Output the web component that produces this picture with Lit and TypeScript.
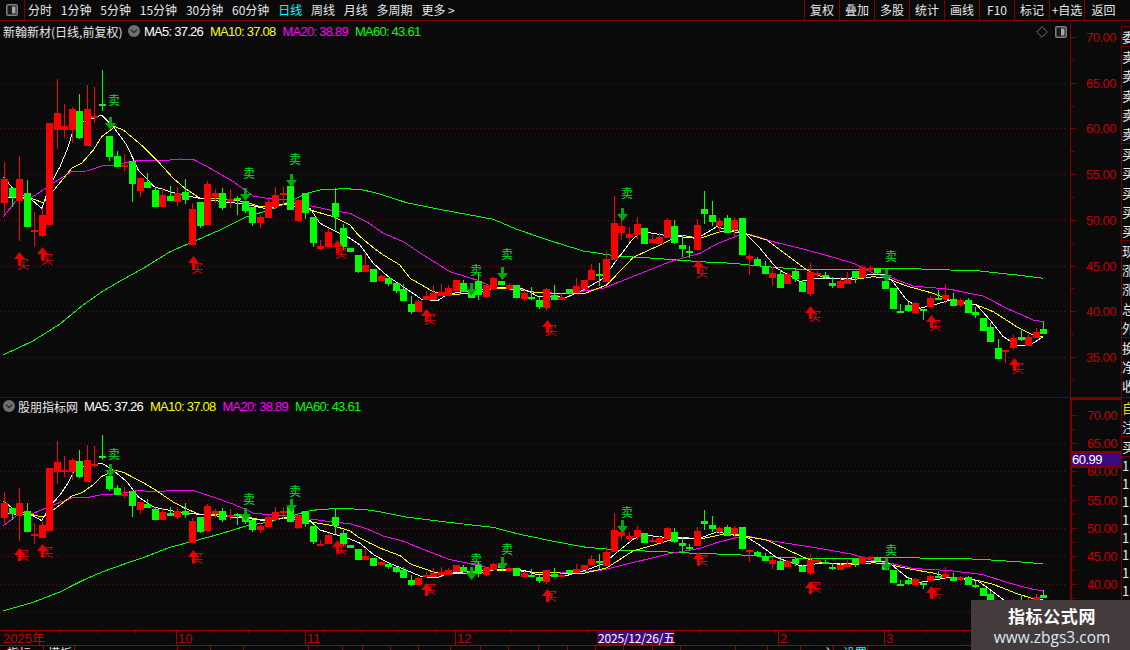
import { LitElement, css, html, svg } from "lit";
import { customElement, property } from "lit/decorators.js";

const RED = "#ff0000";
const GREEN = "#00ff00";

type Pt = [number, number];
// bodyTop, bodyBottom, wickTop, wickBottom, colour. read off 3x crops, hence the origin
type Bar = [number, number, number, number, string];

const r = "r";
const g = "g";

const barsA: Bar[] = [
  [357, 430, 305, 458, r], [384, 412, 384, 440, g], [357, 423, 288, 543, r], [399, 500, 360, 500, g],
  [511, 516, 456, 560, r], [465, 528, 445, 530, r], [190, 495, 190, 495, r], [159, 210, 57, 267, r],
  [198, 209, 132, 234, r], [148, 209, 140, 248, r], [153, 234, 102, 238, g], [148, 258, 75, 258, r],
  [169, 173, 82, 188, r], [132, 137, 30, 152, g], [228, 291, 228, 303, g], [288, 321, 273, 321, g],
  [315, 322, 282, 333, r], [303, 372, 303, 426, g], [354, 393, 354, 411, r], [366, 384, 340, 384, g],
  [390, 441, 380, 441, g], [405, 441, 385, 441, r], [408, 423, 378, 423, g], [400, 426, 381, 438, r],
  [396, 420, 357, 432, g], [447, 555, 430, 555, r], [426, 498, 426, 504, g], [372, 495, 363, 495, r],
  [399, 411, 387, 430, r], [399, 444, 385, 450, g], [417, 426, 387, 444, r], [414, 418, 408, 465, g],
  [423, 453, 423, 459, g], [441, 489, 441, 498, g], [471, 489, 465, 504, r], [426, 474, 411, 474, r],
  [405, 441, 381, 447, r], [399, 403, 381, 435, r], [378, 450, 378, 450, g], [420, 483, 417, 486, r],
  [399, 459, 399, 477, g], [471, 549, 471, 561, g], [558, 567, 540, 570, r], [516, 561, 505, 561, r],
  [429, 471, 384, 510, g], [504, 561, 492, 570, g], [564, 576, 564, 576, g],
];

const barsB: Bar[] = [
  [255, 306, 255, 309, g], [285, 306, 250, 306, r], [297, 336, 297, 336, g], [318, 333, 315, 333, r],
  [324, 342, 324, 348, g], [339, 363, 339, 369, g], [357, 393, 342, 393, g], [402, 426, 378, 432, g],
  [393, 426, 390, 426, r], [378, 390, 363, 390, r], [369, 390, 345, 390, r], [366, 378, 342, 378, r],
  [354, 378, 345, 378, r], [330, 363, 330, 363, r], [339, 366, 330, 366, g], [360, 384, 340, 384, g],
  [333, 375, 310, 390, g], [345, 381, 342, 384, r], [324, 357, 321, 360, r], [333, 345, 333, 345, g],
  [345, 358, 340, 360, r], [345, 384, 345, 384, g], [369, 387, 360, 393, r], [381, 386, 351, 390, g],
  [390, 411, 380, 417, g], [357, 414, 354, 423, r], [375, 390, 345, 390, g], [381, 390, 370, 390, r],
  [357, 372, 357, 372, g], [348, 369, 324, 369, r], [330, 357, 330, 357, r], [300, 330, 282, 330, r],
  [312, 318, 279, 348, g], [267, 336, 243, 336, r], [159, 270, 78, 270, r], [168, 189, 115, 210, r],
  [192, 204, 171, 216, r], [162, 195, 140, 207, r], [174, 222, 174, 222, g], [207, 219, 195, 219, r],
  [201, 222, 190, 222, r], [150, 204, 144, 204, r], [168, 219, 150, 222, g], [225, 237, 195, 261, g],
  [243, 247, 228, 264, g], [165, 240, 147, 240, r],
];

const barsC: Bar[] = [
  [117, 132, 63, 162, g], [135, 156, 93, 168, g], [153, 168, 144, 190, r], [144, 189, 135, 189, g],
  [150, 180, 141, 204, r], [144, 255, 144, 255, g], [258, 267, 252, 315, r], [267, 288, 262, 288, g],
  [288, 312, 273, 312, g], [309, 324, 291, 348, r], [312, 354, 300, 354, g], [312, 342, 309, 342, r],
  [303, 327, 297, 336, g], [336, 366, 330, 366, g], [306, 372, 279, 378, r], [309, 315, 303, 321, r],
  [316, 321, 306, 327, g], [339, 348, 322, 354, g], [333, 354, 322, 354, r], [327, 342, 306, 342, r],
  [303, 324, 303, 339, g], [291, 324, 285, 324, r], [294, 298, 288, 306, r], [297, 310, 297, 312, g],
  [333, 357, 297, 357, g], [354, 417, 354, 417, g], [423, 429, 402, 429, g], [405, 423, 396, 426, g],
  [399, 429, 396, 429, r], [417, 423, 417, 450, g], [384, 411, 378, 411, r], [384, 387, 360, 390, g],
  [375, 387, 342, 402, r], [387, 408, 369, 408, g], [390, 405, 384, 411, r], [390, 429, 384, 429, g],
  [426, 435, 411, 444, g], [444, 483, 444, 483, g], [471, 516, 459, 516, g], [534, 567, 507, 567, g],
  [541, 546, 541, 579, r], [504, 534, 495, 540, r], [501, 510, 477, 513, g], [501, 528, 492, 528, r],
  [486, 504, 474, 504, r], [477, 492, 453, 492, g],
];

const scaleBars = (bars: Bar[], oy: number) =>
  bars.map(([a, b, c, d, col]) => [oy + a / 3, oy + b / 3, oy + c / 3, oy + d / 3, col] as Bar);

const BARS = [...scaleBars(barsA, 60), ...scaleBars(barsB, 170), ...scaleBars(barsC, 170)];

const seg = (ox: number, oy: number, pts: Pt[]) => pts.map(([x, y]) => [ox + x / 3, oy + y / 3] as Pt);

const MA5 = [
  ...seg(0, 60, [[24, 412], [90, 415], [125, 445], [150, 375], [180, 320], [205, 260], [225, 190], [270, 178], [305, 165], [340, 200], [380, 255], [415, 330], [463, 380], [520, 398], [598, 415], [667, 425], [734, 432], [803, 447], [848, 432], [894, 430], [930, 445], [960, 490], [1000, 510], [1050, 535]]),
  ...seg(350, 170, [[30, 225], [70, 280], [115, 320], [160, 350], [215, 388], [262, 392], [295, 372], [340, 365], [430, 355], [499, 350], [540, 365], [560, 378], [650, 382], [700, 360], [760, 325], [800, 270], [850, 205], [880, 185], [950, 197], [1040, 205]]),
  ...seg(700, 170, [[0, 200], [50, 170], [100, 185], [140, 195], [180, 235], [230, 295], [300, 335], [350, 325], [450, 325], [500, 315], [550, 312], [575, 330], [620, 390], [660, 415], [700, 405], [745, 392], [790, 398], [830, 405], [870, 450], [910, 500], [950, 525], [990, 525], [1030, 500]]),
];

const MA10 = [
  ...seg(0, 60, [[10, 350], [50, 400], [130, 428], [170, 380], [215, 325], [245, 310], [280, 270], [305, 230], [345, 200], [370, 210], [400, 235], [430, 260], [470, 300], [520, 355], [555, 385], [600, 415], [660, 415], [734, 425], [780, 440], [848, 432], [930, 450], [1000, 470], [1050, 495]]),
  ...seg(350, 170, [[25, 195], [60, 225], [100, 255], [150, 285], [180, 325], [250, 365], [300, 375], [400, 365], [430, 355], [500, 358], [560, 368], [700, 372], [770, 345], [850, 262], [930, 225], [990, 195], [1050, 205]]),
  ...seg(700, 170, [[60, 185], [110, 182], [140, 192], [200, 210], [260, 255], [320, 300], [370, 322], [450, 330], [520, 320], [560, 325], [620, 348], [700, 370], [760, 395], [830, 405], [880, 425], [950, 470], [1000, 495], [1030, 500]]),
];

const MA20 = [
  ...seg(0, 60, [[10, 470], [50, 420], [100, 410], [150, 375], [215, 335], [260, 333], [310, 317], [350, 315], [410, 300], [480, 303], [540, 297], [580, 298], [640, 330], [700, 365], [760, 408], [800, 415], [870, 420], [930, 437], [1000, 452], [1050, 460]]),
  ...seg(350, 170, [[50, 155], [100, 190], [160, 215], [220, 255], [300, 305], [380, 330], [430, 352], [500, 355], [560, 368], [650, 370], [760, 355], [860, 315], [960, 275], [1050, 250]]),
  ...seg(700, 170, [[50, 222], [110, 198], [150, 193], [220, 215], [320, 240], [400, 262], [460, 280], [520, 310], [570, 322], [640, 348], [750, 358], [850, 378], [920, 415], [1000, 450], [1030, 455]]),
];

const MA60 = [
  [3, 355], [33, 341], [60, 324], [83, 305], [103, 291],
  ...seg(0, 60, [[370, 658], [430, 625], [510, 575], [580, 545], [660, 510], [740, 470], [810, 450], [880, 420], [920, 400], [960, 390], [1050, 385]]),
  ...seg(350, 170, [[0, 58], [40, 60], [90, 72], [170, 98], [280, 120], [430, 148], [500, 178], [600, 212], [700, 243], [800, 258], [900, 264], [1050, 275]]),
  ...seg(700, 170, [[100, 280], [200, 290], [300, 298], [480, 298], [600, 295], [750, 300], [830, 302], [950, 315], [1030, 325]]),
] as Pt[];

// arrow x, arrow top y, label x, label y
const SELLS = [
  [110, 117, 114, 99], [245, 188, 249, 172], [291, 174, 295, 158], [471, 283, 476, 269],
  [502, 267, 507, 253], [622, 208, 627, 192], [886, 269, 891, 255],
];
const BUYS = [
  [19, 252, 23, 263], [42, 247, 47, 258], [193, 256, 197, 267], [337, 240, 341, 252],
  [426, 309, 430, 318], [547, 320, 551, 329], [698, 260, 702, 271], [810, 306, 815, 315],
  [931, 315, 935, 324], [1014, 358, 1018, 367],
];

const LEVELS = [70, 65, 60, 55, 50, 45, 40, 35];

const cornerIcon = html`<svg width="12" height="12" viewBox="0 0 12 12">
  <rect x="0.75" y="0.75" width="10.5" height="10.5" rx="1.5" fill="#1a1a1a" stroke="#808080" stroke-width="1.5"></rect>
  <rect x="6" y="2.5" width="3.5" height="7" fill="#a8a8a8"></rect>
</svg>`;

const roundIcon = html`<svg width="12" height="12" viewBox="0 0 12 12">
  <circle cx="6" cy="6" r="6" fill="#707070"></circle>
  <path d="M3 4.6 L6 7.6 L9 4.6" fill="none" stroke="#242424" stroke-width="1.3"></path>
</svg>`;

@customElement("k-panel")
class KPanel extends LitElement {
  @property({ type: Number }) top = 0;
  @property({ type: Number }) span = 100;
  // page y of the 70.00 line and pixels per 5.00 in this pane
  @property({ type: Number }) y70 = 37;
  @property({ type: Number }) ratio = 1;
  @property({ type: Boolean }) main = false;

  static styles = css`
    :host {
      display: flex;
      position: relative;
      font-family: "Noto Sans CJK SC", "Liberation Sans", sans-serif;
    }
    .plot {
      width: 1070px;
      position: relative;
      overflow: hidden;
    }
    .canvas {
      position: absolute;
      left: 0;
      top: 0;
    }
    .head {
      position: relative;
      display: flex;
      align-items: center;
      padding-left: 3px;
      font-size: 12px;
      color: #e8e8e8;
      white-space: nowrap;
    }
    .main-pane .head {
      height: 20px;
    }
    .sub-pane .head {
      height: 16px;
    }
    .main-pane .name {
      width: 121px;
      margin-right: 4px;
    }
    .sub-pane .name {
      margin: 0 6px 0 3px;
    }
    .main-pane .round {
      margin-right: 4px;
      display: flex;
    }
    .sub-pane .round {
      display: flex;
    }
    .ma {
      font-family: "Liberation Sans", sans-serif;
      font-size: 13px;
      letter-spacing: -0.75px;
      margin-right: 7px;
    }
    .ma5 {
      color: #ffffff;
    }
    .ma10 {
      color: #ffff00;
    }
    .ma20 {
      color: #ff00ff;
    }
    .ma60 {
      color: #00ff00;
    }
    .marks {
      position: absolute;
      top: 5px;
      right: 3px;
      display: flex;
      align-items: center;
      gap: 7px;
    }
    .axis {
      width: 51px;
      position: relative;
      border-left: 1px solid #800000;
      box-sizing: border-box;
    }
    .sub-axis {
      border-left-width: 2px;
      border-top: 2px solid #800000;
    }
    .axis svg {
      display: block;
    }
    .axis text {
      font-family: "Liberation Sans", sans-serif;
      font-size: 13px;
      letter-spacing: -0.5px;
      fill: #c00000;
    }
    .tag {
      position: absolute;
      left: 0;
      right: 0;
      height: 13px;
      line-height: 13px;
      background: #3d0a80;
      border-top: 2px solid #800000;
      border-bottom: 2px solid #800000;
      color: #ffffff;
      font-family: "Liberation Sans", sans-serif;
      font-size: 13px;
      letter-spacing: -0.5px;
    }
  `;

  mapY(y: number) {
    return Math.round(this.y70 + (y - 37) * this.ratio);
  }

  renderBars() {
    return BARS.map((b, i) => {
      const x = Math.round(4 + i * 7.53);
      const col = b[4] === "r" ? RED : GREEN;
      const t = this.mapY(b[0]);
      const h = Math.max(this.mapY(b[1]) - t, 2);
      const hi = this.mapY(b[2]);
      const lo = this.mapY(b[3]);
      return svg`<rect x=${x} y=${hi} width="1" height=${lo - hi} fill=${col}></rect>
        <rect x=${x - 3} y=${t} width="7" height=${h} fill=${col}></rect>`;
    });
  }

  line(points: Pt[], col: string) {
    const d = points.map(([x, y]) => `${x.toFixed(1)},${(this.y70 + (y - 37) * this.ratio).toFixed(1)}`).join(" ");
    return svg`<polyline points=${d} fill="none" stroke=${col} stroke-width="1"></polyline>`;
  }

  renderSignals() {
    const sells = SELLS.map(([ax, ay, tx, ty]) => {
      const y = this.mapY(ay);
      return svg`<path d="M${ax - 1} ${y} h3 v6 h4 l-5.5 7 l-5.5 -7 h4 z" fill="#00a80a"></path>
        <text x=${tx} y=${this.mapY(ty)} text-anchor="middle" dominant-baseline="central" fill="#00e020" font-size="12">卖</text>`;
    });
    const buys = BUYS.map(([ax, ay, tx, ty]) => {
      const y = this.mapY(ay);
      return svg`<path d="M${ax + 0.5} ${y} l5.5 7 h-4 v6 h-3 v-6 h-4 z" fill="#e60000"></path>
        <text x=${tx} y=${this.mapY(ty)} text-anchor="middle" dominant-baseline="central" fill="#f00000" font-size="12">买</text>`;
    });
    return [sells, buys];
  }

  renderAxis() {
    const axisTop = this.main ? this.top : this.top + 2;
    const h = this.span - (this.main ? 0 : 2);
    const step = 45.7 * this.ratio;
    const shown = this.main ? LEVELS : LEVELS.slice(0, 7);
    return svg`<svg width="50" height=${h} viewBox="1071 ${axisTop} 50 ${h}" shape-rendering="crispEdges">
      ${shown.map((p, i) => {
        const y = Math.round(this.y70 + i * step);
        const mid = Math.round(this.y70 + (i + 0.5) * step);
        return svg`<rect x="1071" y=${y} width="5" height="1" fill="#800000"></rect>
          <rect x="1071" y=${mid} width="3" height="1" fill="#800000"></rect>
          <text x="1086" y=${y + 5} shape-rendering="auto">${p.toFixed(2)}</text>`;
      })}
    </svg>`;
  }

  render() {
    const last = this.main ? 356 : 612;
    const grid: number[] = [];
    const step = 45.7 * this.ratio;
    for (let i = 1; this.y70 + i * step <= last + 1; i++) grid.push(Math.round(this.y70 + i * step));
    return html`
      <div class="plot ${this.main ? "main-pane" : "sub-pane"}" style="height:${this.span}px">
        <svg class="canvas" width="1070" height=${this.span} viewBox="0 ${this.top} 1070 ${this.span}" shape-rendering="crispEdges" font-family="Noto Sans CJK SC">
          ${grid.map((y) => svg`<line x1="0" x2="1066" y1=${y + 0.5} y2=${y + 0.5} stroke="#701010" stroke-dasharray="1 3"></line>`)}
          ${this.line(MA60, "#00ff00")}
          ${this.line(MA20, "#ff00ff")}
          ${this.line(MA10, "#ffff00")}
          ${this.line(MA5, "#ffffff")}
          ${this.renderBars()}
          <g shape-rendering="auto">${this.renderSignals()}</g>
        </svg>
        <div class="head">
          ${this.main
            ? html`<span class="name">新翰新材(日线,前复权)</span><span class="round">${roundIcon}</span>`
            : html`<span class="round">${roundIcon}</span><span class="name">股朋指标网</span>`}
          <span class="ma ma5">MA5: 37.26</span>
          <span class="ma ma10">MA10: 37.08</span>
          <span class="ma ma20">MA20: 38.89</span>
          <span class="ma ma60">MA60: 43.61</span>
        </div>
        ${this.main
          ? html`<div class="marks">
              <svg width="12" height="12" viewBox="0 0 12 12"><path d="M6 .7 L11.3 6 L6 11.3 L.7 6 Z" fill="none" stroke="#707070"></path></svg>
              ${cornerIcon}
            </div>`
          : ""}
      </div>
      <div class="axis ${this.main ? "" : "sub-axis"}" style="height:${this.span}px">
        ${this.renderAxis()}
        ${this.main ? "" : html`<div class="tag" style="top:${451 - this.top - 2}px">60.99</div>`}
      </div>
    `;
  }
}

@customElement("app-root")
export class AppRoot extends LitElement {
  static styles = css`
    :host {
      display: flex;
      flex-direction: column;
      width: 1130px;
      height: 650px;
      overflow: hidden;
      background: #0a0a0a;
      color: #e8e8e8;
      font-family: "Noto Sans CJK SC", "Liberation Sans", sans-serif;
      font-size: 12px;
      position: relative;
    }
    .toolbar {
      height: 20px;
      flex: none;
      display: flex;
      align-items: stretch;
      border-bottom: 1px solid #800000;
      line-height: 20px;
      white-space: nowrap;
    }
    .corner {
      width: 23px;
      border-right: 1px solid #800000;
      display: flex;
      align-items: center;
      justify-content: center;
      padding-right: 1px;
    }
    .tabs {
      flex: 1;
      display: flex;
      gap: 8.8px;
      margin-left: 3px;
    }
    .on {
      color: #00ffff;
    }
    .tools {
      display: flex;
    }
    .tools span {
      width: 35px;
      box-sizing: border-box;
      border-left: 1px solid #800000;
      text-align: center;
    }
    .tools span:last-child {
      width: 46px;
      padding-right: 8px;
    }
    .body {
      flex: 1;
      min-height: 0;
      display: flex;
    }
    .charts {
      width: 1121px;
      display: flex;
      flex-direction: column;
    }
    .sep {
      height: 1px;
      background: #6a0000;
      flex: none;
    }
    .dates {
      position: relative;
      flex: 1;
      min-height: 0;
      overflow: hidden;
    }
    .dates svg {
      display: block;
    }
    .dates text {
      font-family: "Liberation Sans", "Noto Sans CJK SC", sans-serif;
      font-size: 13px;
      fill: #c00000;
    }
    .dates text.tab {
      font-family: "Noto Sans CJK SC", sans-serif;
      font-size: 12px;
      fill: #e8e8e8;
    }
    .dates text.tab-on {
      fill: #00ffff;
    }
    .cursor {
      position: absolute;
      left: 597px;
      top: 1px;
      width: 77px;
      height: 14px;
      box-sizing: border-box;
      background: #3d0a80;
      border: 1px solid #800000;
      color: #ffffff;
      font-size: 12px;
      line-height: 12px;
      text-align: center;
      white-space: nowrap;
      letter-spacing: -0.2px;
    }
    .side {
      flex: 1;
      border-left: 1px solid #700000;
      overflow: hidden;
      margin-top: 5px;
      font-size: 13px;
      color: #e8e8e8;
      border-top: 1px solid #700000;
    }
    .group {
      border-bottom: 1px solid #700000;
      white-space: nowrap;
    }
    .group div {
      height: 19.2px;
      line-height: 19.2px;
    }
    .group.fill {
      padding-bottom: 1.4px;
    }
    .group.low div {
      height: 19px;
      line-height: 19px;
    }
    .hi {
      color: #e0e000;
    }
    .group.plain {
      border-bottom: 0;
    }
    .group.plain div {
      height: 17.9px;
      line-height: 17.9px;
    }
    .mark {
      position: absolute;
      right: 0;
      bottom: 0;
      width: 159px;
      height: 50px;
      background: #443c3c;
      display: flex;
      flex-direction: column;
      align-items: center;
      padding-left: 3px;
      box-sizing: border-box;
    }
    .mark b {
      font-size: 17px;
      line-height: 28px;
      height: 27px;
      letter-spacing: 0.6px;
      color: #ffffff;
      margin-top: 2px;
    }
    .mark span {
      font-family: "Open Sans", sans-serif;
      font-size: 15.5px;
      line-height: 17px;
      color: #dce8f6;
    }
  `;

  render() {
    const ticks: number[] = [];
    for (let x = 22; x < 1121; x += 37.65) ticks.push(Math.round(x));
    const strip = [43, 74, 177, 210, 243, 308, 342, 362, 390, 418, 450, 480, 508, 538, 567, 595, 623, 652, 680, 735, 767, 800, 833, 867];
    return html`
      <div class="toolbar">
        <div class="corner">${cornerIcon}</div>
        <div class="tabs">
          ${["分时", "1分钟", "5分钟", "15分钟", "30分钟", "60分钟"].map((t) => html`<span>${t}</span>`)}
          <span class="on">日线</span>
          ${["周线", "月线", "多周期", "更多 >"].map((t) => html`<span>${t}</span>`)}
        </div>
        <div class="tools">
          ${["复权", "叠加", "多股", "统计", "画线", "F10", "标记", "+自选", "返回"].map((t) => html`<span>${t}</span>`)}
        </div>
      </div>
      <div class="body">
        <div class="charts">
          <k-panel main top="21" span="376" y70="37" ratio="1"></k-panel>
          <div class="sep"></div>
          <k-panel top="398" span="232" y70="415" ratio="0.6165"></k-panel>
          <div class="dates">
            <svg width="1121" height="20" viewBox="0 630 1121 20" shape-rendering="crispEdges">
              <rect x="0" y="630" width="1121" height="1" fill="#a00000"></rect>
              <rect x="0" y="645" width="1121" height="1" fill="#a00000"></rect>
              ${ticks.map((x) => svg`<rect x=${x} y="631" width="1" height="2" fill="#a00000"></rect>`)}
              ${[176, 305, 455, 778, 884].map((x) => svg`<rect x=${x} y="631" width="1" height="14" fill="#a00000"></rect>`)}
              ${strip.map((x) => svg`<rect x=${x} y="646" width="1" height="4" fill="#a00000"></rect>`)}
              <g shape-rendering="auto">
                <text x="3" y="643">2025年</text>
                <text x="178" y="643">10</text>
                <text x="307" y="643">11</text>
                <text x="457" y="643">12</text>
                <text x="780" y="643">2</text>
                <text x="886" y="643">3</text>
                <text class="tab" x="7" y="658">指标</text>
                <text class="tab" x="48" y="658">模板</text>
                <text class="tab" x="822" y="658">主</text>
                <text class="tab tab-on" x="843" y="658">设置</text>
              </g>
            </svg>
            <div class="cursor">2025/12/26/五</div>
          </div>
        </div>
        <div class="side">
          <div class="group"><div>委</div></div>
          <div class="group">${["卖", "卖", "卖", "卖", "卖"].map((t) => html`<div>${t}</div>`)}</div>
          <div class="group">${["买", "买", "买", "买", "买"].map((t) => html`<div>${t}</div>`)}</div>
          <div class="group">${["现", "涨", "涨", "总", "外"].map((t) => html`<div>${t}</div>`)}</div>
          <div class="group fill">${["换", "净", "收"].map((t) => html`<div>${t}</div>`)}</div>
          <div class="group low"><div class="hi">自</div><div>注</div></div>
          <div class="group low"><div>买</div></div>
          <div class="group plain">${[1, 1, 1, 1, 1, 1, 1, 1, 1, 1].map((t) => html`<div>${t}</div>`)}</div>
        </div>
      </div>
      <div class="mark"><b>指标公式网</b><span>www.zbgs3.com</span></div>
    `;
  }
}
